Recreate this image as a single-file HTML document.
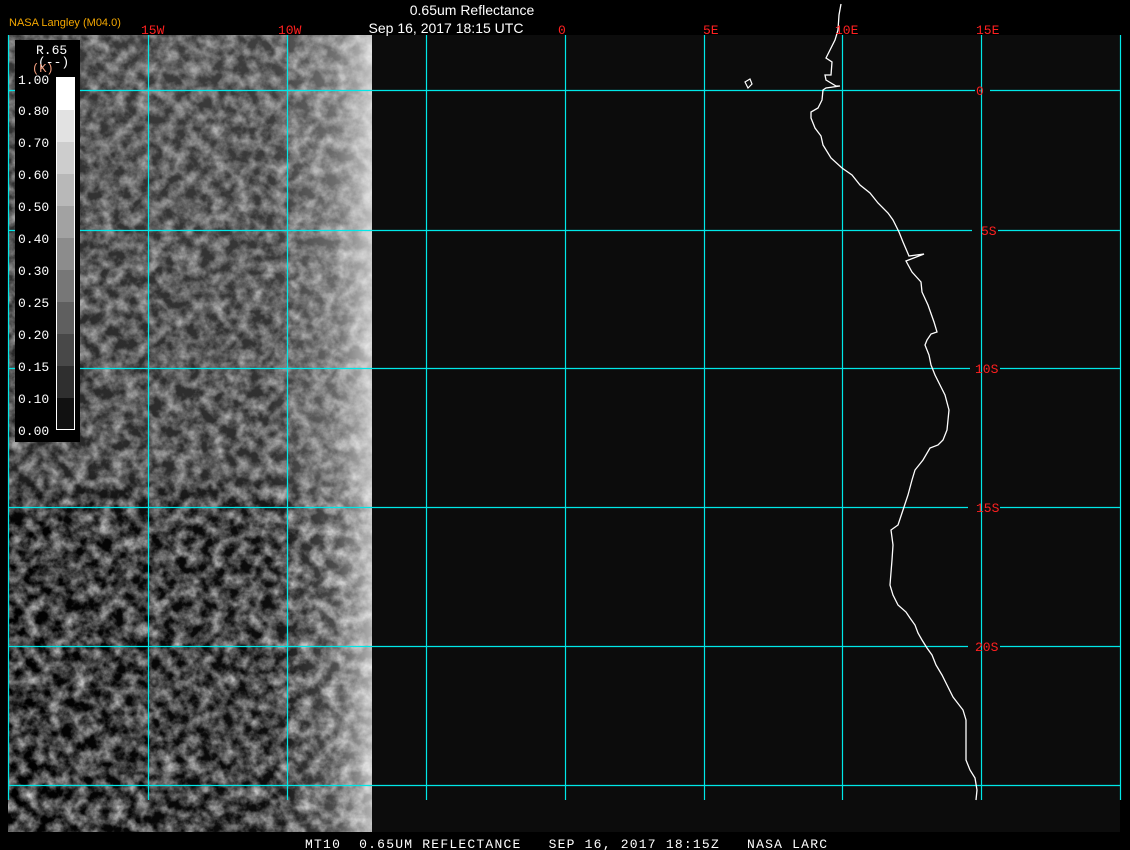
<!DOCTYPE html>
<html><head><meta charset="utf-8"><style>
html,body{margin:0;padding:0;background:#000;width:1130px;height:850px;overflow:hidden}
svg{display:block}
text{font-family:"Liberation Mono","DejaVu Sans Mono",monospace;white-space:pre}
</style></head><body>
<svg width="1130" height="850" viewBox="0 0 1130 850" xmlns="http://www.w3.org/2000/svg">
<defs>
<filter id="sat" x="0" y="0" width="100%" height="100%" color-interpolation-filters="sRGB">
<feTurbulence type="fractalNoise" baseFrequency="0.08" numOctaves="4" seed="7" result="n"/>
<feColorMatrix type="matrix" values="1.5 0 0 0 -0.46  1.5 0 0 0 -0.46  1.5 0 0 0 -0.46  0 0 0 0 1"/>
</filter>
<linearGradient id="edge" x1="0" x2="1" y1="0" y2="0">
<stop offset="0" stop-color="#fff" stop-opacity="0"/>
<stop offset="0.72" stop-color="#fff" stop-opacity="0.05"/>
<stop offset="0.9" stop-color="#fff" stop-opacity="0.3"/>
<stop offset="1" stop-color="#fff" stop-opacity="0.7"/>
</linearGradient>
<linearGradient id="vert" x1="0" x2="0" y1="0" y2="1">
<stop offset="0" stop-color="#777" stop-opacity="0.45"/>
<stop offset="0.55" stop-color="#666" stop-opacity="0.35"/>
<stop offset="0.62" stop-color="#000" stop-opacity="0.15"/>
<stop offset="1" stop-color="#000" stop-opacity="0.15"/>
</linearGradient>
</defs>
<rect width="1130" height="850" fill="#000"/>
<rect x="8" y="35" width="1112" height="797" fill="#0c0c0c"/>
<rect x="8" y="35" width="364" height="797" fill="#333" filter="url(#sat)"/>
<rect x="8" y="35" width="364" height="797" fill="url(#vert)"/>
<rect x="8" y="35" width="364" height="797" fill="url(#edge)"/>
<g stroke="#00e8e8" stroke-width="1.2">
<line x1="8" y1="90.5" x2="975" y2="90.5"/><line x1="990" y1="90.5" x2="1120" y2="90.5"/>
<line x1="8" y1="230.5" x2="972" y2="230.5"/><line x1="998" y1="230.5" x2="1120" y2="230.5"/>
<line x1="8" y1="368.5" x2="970" y2="368.5"/><line x1="1000" y1="368.5" x2="1120" y2="368.5"/>
<line x1="8" y1="507.5" x2="968" y2="507.5"/><line x1="1000" y1="507.5" x2="1120" y2="507.5"/>
<line x1="8" y1="646.5" x2="968" y2="646.5"/><line x1="1000" y1="646.5" x2="1120" y2="646.5"/>
<line x1="8" y1="785.5" x2="1120" y2="785.5"/>
<line x1="8.5" y1="35" x2="8.5" y2="800"/>
<line x1="148.5" y1="35" x2="148.5" y2="800"/>
<line x1="287.5" y1="35" x2="287.5" y2="800"/>
<line x1="426.5" y1="35" x2="426.5" y2="800"/>
<line x1="565.5" y1="35" x2="565.5" y2="800"/>
<line x1="704.5" y1="35" x2="704.5" y2="800"/>
<line x1="842.5" y1="35" x2="842.5" y2="800"/>
<line x1="981.5" y1="35" x2="981.5" y2="800"/>
<line x1="1120.5" y1="35" x2="1120.5" y2="800"/>
</g>
<polyline fill="none" stroke="#fff" stroke-width="1.3" points="841,4 839,15 838,30 835,40 830,50 826,58 832,62 831,75 825,75 826,80 836,86 840,86 826,88 823,90 822,100 818,108 811,112 811,118 815,128 821,136 823,145 831,158 842,168 852,175 860,185 870,193 878,203 888,213 893,220 899,232 903,242 909,256 924,254 906,261 912,272 921,282 922,292 928,305 934,322 937,332 931,334 927,340 925,345 929,355 931,365 935,375 940,385 945,395 949,410 947,430 943,440 938,445 930,448 923,460 915,470 912,480 908,495 903,510 898,525 891,530 893,545 892,560 890,585 893,595 898,605 906,612 910,618 915,625 918,633 922,640 927,648 932,655 936,665 942,675 947,685 953,697 963,710 966,720 966,730 966,740 966,760 970,770 975,778 977,790 976,800"/>
<polygon points="745,82 750,79 752,84 748,88" fill="none" stroke="#fff" stroke-width="1.2"/>
<rect x="15" y="40" width="65" height="402" fill="#000"/>
<g>
<rect x="56" y="77" width="19" height="33" fill="#fff"/>
<rect x="56" y="110" width="19" height="32" fill="#e2e2e2"/>
<rect x="56" y="142" width="19" height="32" fill="#cdcdcd"/>
<rect x="56" y="174" width="19" height="32" fill="#b8b8b8"/>
<rect x="56" y="206" width="19" height="32" fill="#a2a2a2"/>
<rect x="56" y="238" width="19" height="32" fill="#8c8c8c"/>
<rect x="56" y="270" width="19" height="32" fill="#777"/>
<rect x="56" y="302" width="19" height="32" fill="#5f5f5f"/>
<rect x="56" y="334" width="19" height="32" fill="#484848"/>
<rect x="56" y="366" width="19" height="32" fill="#2f2f2f"/>
<rect x="56" y="398" width="19" height="32" fill="#111"/>
<rect x="56.5" y="77.5" width="18" height="352" fill="none" stroke="#fff"/>
</g>
<g fill="#fff" font-size="13">
<text x="36" y="54">R.65</text>
<text x="38" y="66">(--)</text>
<text x="18" y="84">1.00</text>
<text x="18" y="115">0.80</text>
<text x="18" y="147">0.70</text>
<text x="18" y="179">0.60</text>
<text x="18" y="211">0.50</text>
<text x="18" y="243">0.40</text>
<text x="18" y="275">0.30</text>
<text x="18" y="307">0.25</text>
<text x="18" y="339">0.20</text>
<text x="18" y="371">0.15</text>
<text x="18" y="403">0.10</text>
<text x="18" y="435">0.00</text>
</g>
<text x="32" y="72" fill="#f4a080" font-size="12">(K)</text>
<text x="9" y="26" fill="#f5a800" font-size="11" style="font-family:'Liberation Sans',sans-serif">NASA Langley (M04.0)</text>
<text x="472" y="15" fill="#fff" font-size="14" text-anchor="middle" style="font-family:'Liberation Sans',sans-serif">0.65um Reflectance</text>
<text x="446" y="33" fill="#fff" font-size="14" text-anchor="middle" style="font-family:'Liberation Sans',sans-serif">Sep 16, 2017 18:15 UTC</text>
<g fill="#ff2020" font-size="13">
<text x="141" y="34">15W</text>
<text x="278" y="34">10W</text>
<text x="558" y="34">0</text>
<text x="703" y="34">5E</text>
<text x="835" y="34">10E</text>
<text x="976" y="34">15E</text>
<text x="976" y="95">0</text>
<text x="981" y="235">5S</text>
<text x="975" y="373">10S</text>
<text x="976" y="512">15S</text>
<text x="975" y="651">20S</text>
</g>
<text x="305" y="848" fill="#fff" font-size="13" letter-spacing="1.22">MT10  0.65UM REFLECTANCE   SEP 16, 2017 18:15Z   NASA LARC</text>
</svg>
</body></html>
